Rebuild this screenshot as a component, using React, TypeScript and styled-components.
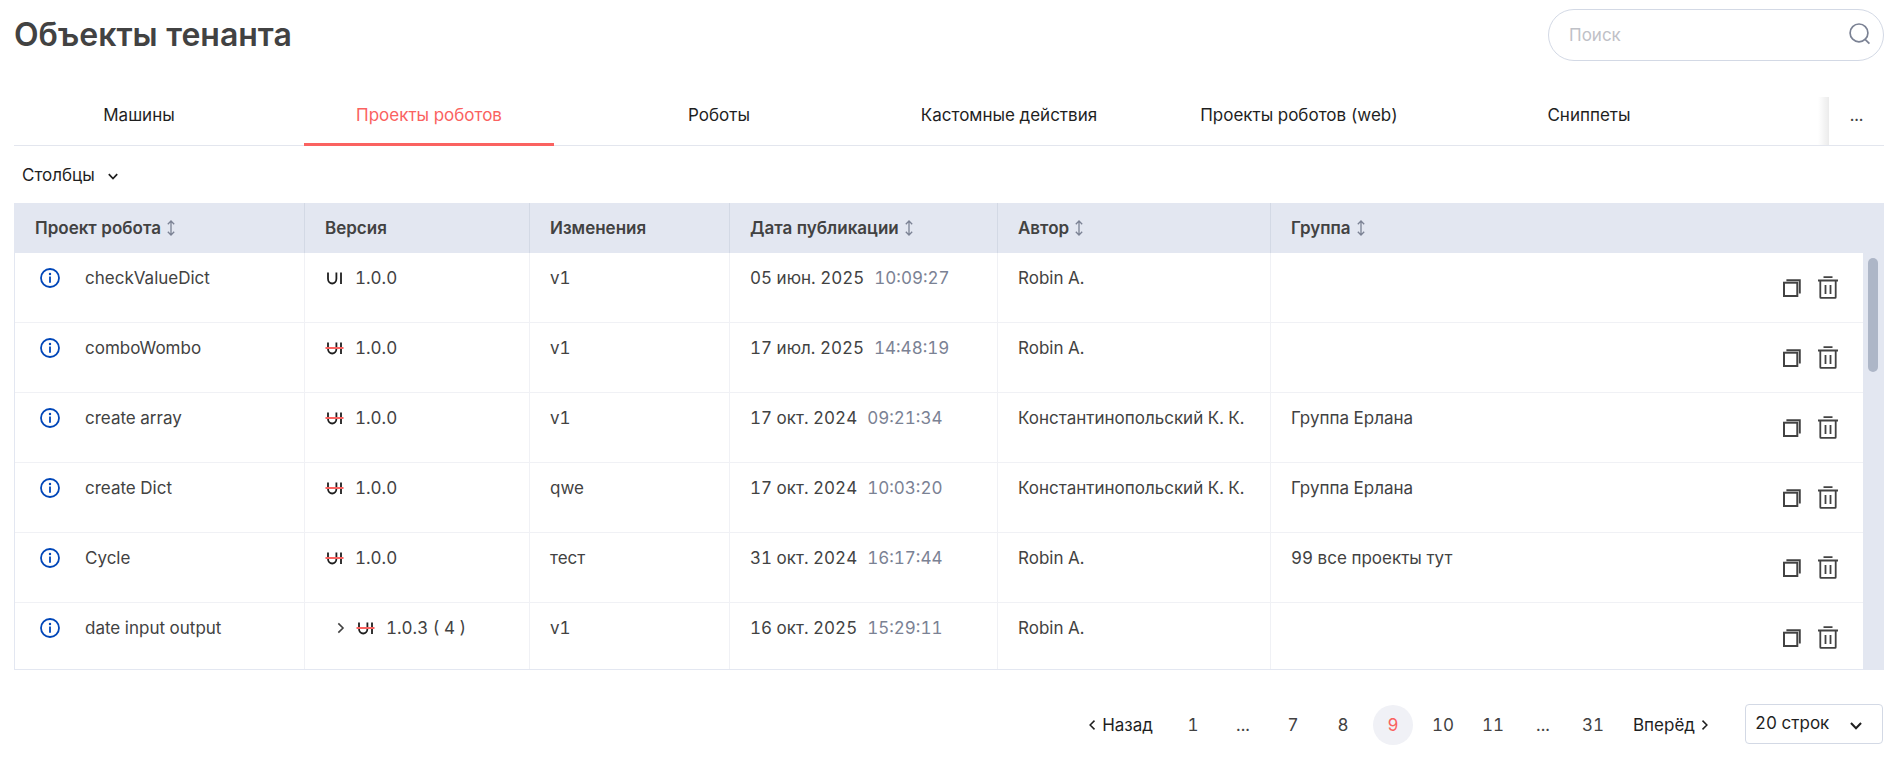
import React, { useState } from "react";
import styled, { createGlobalStyle } from "styled-components";

const color = {
  ink: "#1f1f1f",
  text: "#424242",
  muted: "#7b8294",
  accent: "#fa6260",
  info: "#0046b8",
  border: "#d3d9e5",
  line: "#e3e6ee",
  head: "#e3e7f1",
  grid: "#f0f1f5",
  thumb: "#adb6c7",
};

const GlobalStyle = createGlobalStyle`
  *, *::before, *::after { box-sizing: border-box; }
  body {
    margin: 0;
    background: #fff;
    color: ${color.text};
    font: 400 17px/24px Inter, "Noto Sans", sans-serif;
    font-variant-numeric: tabular-nums;
  }
  button, input, select { font: inherit; color: inherit; }
  button { padding: 0; border: 0; background: none; cursor: pointer; }
  svg { display: block; flex: none; }
`;

const Page = styled.main`
  padding: 9px 14px 16px;
`;

const Header = styled.header`
  display: flex;
  align-items: center;
  justify-content: space-between;
  margin-bottom: 36px;
`;

const Title = styled.h1`
  margin: 0;
  font-size: 32px;
  line-height: 40px;
  font-weight: 600;
`;

const SearchBox = styled.label`
  display: flex;
  align-items: center;
  width: 336px;
  height: 52px;
  padding: 0 12px 0 20px;
  border: 1px solid ${color.border};
  border-radius: 26px;
  color: ${color.muted};
`;

const SearchInput = styled.input`
  flex: 1;
  min-width: 0;
  padding: 0;
  border: 0;
  outline: 0;
  background: none;
  color: ${color.text};
  &::placeholder { color: #bfc1c7; opacity: 1; }
`;

const TabBar = styled.nav`
  display: flex;
  height: 49px;
  border-bottom: 1px solid ${color.line};
`;

const TabList = styled.div`
  display: flex;
  flex: 1;
  gap: 40px;
  min-width: 0;
  margin-bottom: -1px;
  overflow: hidden;
`;

const Tab = styled.button<{ $active: boolean }>`
  flex: none;
  width: 250px;
  padding-bottom: ${(p) => (p.$active ? 11 : 14)}px;
  border-bottom: ${(p) => (p.$active ? `3px solid ${color.accent}` : "0")};
  color: ${(p) => (p.$active ? color.accent : color.ink)};
`;

const MoreTabs = styled.button`
  width: 66px;
  padding: 0 0 12px 11px;
  background: linear-gradient(to right, transparent, rgba(0, 0, 0, 0.08)) left / 11px 100% no-repeat;
`;

const Toolbar = styled.div`
  display: flex;
  align-items: center;
  height: 57px;
  padding: 0 8px;
`;

const ColumnsButton = styled.button`
  display: flex;
  align-items: center;
  gap: 13px;
  color: ${color.ink};
`;

const Frame = styled.section`
  display: grid;
  grid-template-columns: minmax(0, 1fr) 20px;
  height: 467px;
  overflow: hidden;
  border: 1px solid ${color.head};
  border-top: 0;
  background: ${color.head};
`;

const Table = styled.table`
  width: 100%;
  table-layout: fixed;
  border-collapse: separate;
  border-spacing: 0;
`;

const Col = styled.col<{ $width?: number }>`
  width: ${(p) => (p.$width ? `${p.$width}px` : "auto")};
`;

const HeadCell = styled.th`
  height: 50px;
  padding: 0 20px;
  border-right: 1px solid ${color.border};
  background: ${color.head};
  font-weight: 600;
  text-align: left;
  white-space: nowrap;
  &:nth-last-child(-n + 2) { border-right: 0; }
`;

const SortButton = styled.button`
  display: flex;
  align-items: center;
  gap: 6px;
  font-weight: 600;
  svg { color: ${color.muted}; }
`;

const Cell = styled.td`
  height: 70px;
  padding: 13px 20px 0;
  border-right: 1px solid ${color.grid};
  border-bottom: 1px solid ${color.grid};
  background: #fff;
  vertical-align: top;
  white-space: nowrap;
  &:nth-last-child(-n + 2) { border-right: 0; }
`;

const ActionCell = styled(Cell)`
  padding: 0 25px 0 0;
  vertical-align: middle;
`;

const NameLine = styled.div`
  display: flex;
  align-items: center;
  gap: 25px;
  padding-left: 5px;
`;

const InfoButton = styled.button`
  color: ${color.info};
`;

const VersionLine = styled.div<{ $nested: boolean }>`
  display: flex;
  align-items: center;
  gap: 11px;
  padding-left: ${(p) => (p.$nested ? 12 : 0)}px;
`;

const Time = styled.time`
  margin-left: 10px;
  color: ${color.muted};
`;

const Actions = styled.div`
  display: flex;
  align-items: center;
  justify-content: flex-end;
  gap: 17px;
`;

const ScrollTrack = styled.div`
  padding: 55px 5px 0;
`;

const ScrollThumb = styled.div`
  height: 114px;
  border-radius: 5px;
  background: ${color.thumb};
`;

const Footer = styled.footer`
  display: flex;
  align-items: flex-start;
  justify-content: flex-end;
  gap: 36px;
  margin-top: 34px;
  padding-right: 1px;
`;

const Pager = styled.nav`
  display: flex;
  align-items: center;
  gap: 10px;
  padding-top: 1px;
`;

const PageButton = styled.button<{ $active?: boolean }>`
  width: 40px;
  height: 40px;
  border-radius: 50%;
  background: ${(p) => (p.$active ? "#f0f1f6" : "none")};
  color: ${(p) => (p.$active ? color.accent : color.text)};
`;

const Gap = styled.span`
  width: 40px;
  text-align: center;
`;

const StepButton = styled.button<{ $side: "left" | "right" }>`
  display: flex;
  align-items: center;
  gap: 6px;
  margin-${(p) => (p.$side === "left" ? "right" : "left")}: 10px;
  color: ${color.ink};
`;

const RowsBox = styled.div`
  display: grid;
  align-items: center;
  width: 138px;
  color: ${color.ink};
  > * { grid-area: 1 / 1; }
  > svg { justify-self: end; margin-right: 21px; pointer-events: none; }
`;

const RowsSelect = styled.select`
  width: 100%;
  height: 40px;
  padding: 0 32px 2px 9px;
  border: 1px solid ${color.border};
  border-radius: 4px;
  background: #fff;
  appearance: none;
`;

const SearchIcon = () => (
  <svg width="22" height="24" viewBox="0 0 22 24" fill="none" stroke="currentColor" strokeWidth="1.7">
    <circle cx="10" cy="9.9" r="8.9" />
    <path d="M15.6 15.9 20.4 20.7" />
  </svg>
);

const ChevronDown = ({ size = 10 }: { size?: number }) => (
  <svg width={size} height={size} viewBox="0 0 10 10" fill="none" stroke="currentColor" strokeWidth="1.7">
    <path d="M.8 4.2 5 8.6 9.2 4.2" />
  </svg>
);

const ChevronSide = ({ left = false, height = 10 }: { left?: boolean; height?: number }) => (
  <svg width="8" height={height} viewBox="0 0 6 8" fill="none" stroke="currentColor" strokeWidth="1.2">
    <path d={left ? "M5 .5 1.5 4 5 7.5" : "M1 .5 4.5 4 1 7.5"} />
  </svg>
);

const SortIcon = () => (
  <svg width="8" height="16" viewBox="0 0 8 16" fill="none" stroke="currentColor" strokeWidth="1.3">
    <path d="M4 1.5V14.5M.8 4.2 4 1 7.2 4.2M.8 11.8 4 15 7.2 11.8" />
  </svg>
);

const InfoIcon = () => (
  <svg width="20" height="20" viewBox="0 0 20 20" fill="none" stroke="currentColor" strokeWidth="1.8">
    <circle cx="10" cy="10" r="9" />
    <path d="M10 8.6V14.8" />
    <circle cx="10" cy="6" r="1.2" fill="currentColor" stroke="none" />
  </svg>
);

const UiIcon = ({ off }: { off: boolean }) => (
  <svg width="19" height="20" viewBox="0 0 19 20" fill="none" role="img" aria-label={off ? "UI off" : "UI on"}>
    <path d="M3 4.4V10.8A4.2 4.7 0 0 0 11.4 10.8V4.4M16 4.4V16" stroke={color.ink} strokeWidth="1.8" />
    {off && <path d="M.5 10H18.5" stroke={color.accent} strokeWidth="2" />}
  </svg>
);

const CopyIcon = () => (
  <svg width="18" height="18" viewBox="0 0 18 18" fill="none" stroke="currentColor">
    <rect x="1" y="3.7" width="13.3" height="13.3" strokeWidth="2" />
    <path d="M3.4 1.2H16.8V14.6" strokeWidth="1.9" />
  </svg>
);

const TrashIcon = () => (
  <svg width="20" height="23" viewBox="0 0 20 23" fill="none" stroke="currentColor" strokeWidth="1.8">
    <path d="M5.5 1.2H14.5M0 4.5H20M2.3 4.5V21.2Q2.3 21.8 2.9 21.8H17.1Q17.7 21.8 17.7 21.2V4.5" />
    <path d="M7.5 9V18M12.5 9V18" />
  </svg>
);

const tabs = ["Машины", "Проекты роботов", "Роботы", "Кастомные действия", "Проекты роботов (web)", "Сниппеты"];

const columns = [
  { title: "Проект робота", sortable: true, width: 290 },
  { title: "Версия", sortable: false, width: 225 },
  { title: "Изменения", sortable: false, width: 200 },
  { title: "Дата публикации", sortable: true, width: 268 },
  { title: "Автор", sortable: true, width: 273 },
  { title: "Группа", sortable: true, width: undefined },
];

type Project = {
  name: string;
  ui: boolean;
  version: string;
  count?: number;
  changes: string;
  date: string;
  time: string;
  author: string;
  group: string;
};

const projects: Project[] = [
  { name: "checkValueDict", ui: true, version: "1.0.0", changes: "v1", date: "05 июн. 2025", time: "10:09:27", author: "Robin A.", group: "" },
  { name: "comboWombo", ui: false, version: "1.0.0", changes: "v1", date: "17 июл. 2025", time: "14:48:19", author: "Robin A.", group: "" },
  { name: "create array", ui: false, version: "1.0.0", changes: "v1", date: "17 окт. 2024", time: "09:21:34", author: "Константинопольский К. К.", group: "Группа Ерлана" },
  { name: "create Dict", ui: false, version: "1.0.0", changes: "qwe", date: "17 окт. 2024", time: "10:03:20", author: "Константинопольский К. К.", group: "Группа Ерлана" },
  { name: "Cycle", ui: false, version: "1.0.0", changes: "тест", date: "31 окт. 2024", time: "16:17:44", author: "Robin A.", group: "99 все проекты тут" },
  { name: "date input output", ui: false, version: "1.0.3", count: 4, changes: "v1", date: "16 окт. 2025", time: "15:29:11", author: "Robin A.", group: "" },
];

const pages = ["1", "...", "7", "8", "9", "10", "11", "...", "31"];

export default function App() {
  const [tab, setTab] = useState("Проекты роботов");
  const [page, setPage] = useState("9");

  return (
    <Page>
      <GlobalStyle />
      <Header>
        <Title>Объекты тенанта</Title>
        <SearchBox>
          <SearchInput type="text" placeholder="Поиск" aria-label="Поиск" />
          <SearchIcon />
        </SearchBox>
      </Header>

      <TabBar>
        <TabList>
          {tabs.map((name) => (
            <Tab key={name} $active={name === tab} onClick={() => setTab(name)}>
              {name}
            </Tab>
          ))}
        </TabList>
        <MoreTabs aria-label="Ещё">...</MoreTabs>
      </TabBar>

      <Toolbar>
        <ColumnsButton>
          Столбцы
          <ChevronDown />
        </ColumnsButton>
      </Toolbar>

      <Frame>
        <Table>
          <colgroup>
            {columns.map((c) => (
              <Col key={c.title} $width={c.width} />
            ))}
            <Col $width={100} />
          </colgroup>
          <thead>
            <tr>
              {columns.map((c) => (
                <HeadCell key={c.title} scope="col">
                  {c.sortable ? (
                    <SortButton>
                      {c.title}
                      <SortIcon />
                    </SortButton>
                  ) : (
                    c.title
                  )}
                </HeadCell>
              ))}
              <HeadCell scope="col" aria-label="Действия" />
            </tr>
          </thead>
          <tbody>
            {projects.map((p) => (
              <tr key={p.name}>
                <Cell>
                  <NameLine>
                    <InfoButton aria-label="Информация">
                      <InfoIcon />
                    </InfoButton>
                    {p.name}
                  </NameLine>
                </Cell>
                <Cell>
                  <VersionLine $nested={p.count !== undefined}>
                    {p.count !== undefined && <ChevronSide height={12} />}
                    <UiIcon off={!p.ui} />
                    {p.version}
                    {p.count !== undefined && ` ( ${p.count} )`}
                  </VersionLine>
                </Cell>
                <Cell>{p.changes}</Cell>
                <Cell>
                  {p.date}
                  <Time>{p.time}</Time>
                </Cell>
                <Cell>{p.author}</Cell>
                <Cell>{p.group}</Cell>
                <ActionCell>
                  <Actions>
                    <button aria-label="Копировать">
                      <CopyIcon />
                    </button>
                    <button aria-label="Удалить">
                      <TrashIcon />
                    </button>
                  </Actions>
                </ActionCell>
              </tr>
            ))}
          </tbody>
        </Table>
        <ScrollTrack>
          <ScrollThumb />
        </ScrollTrack>
      </Frame>

      <Footer>
        <Pager aria-label="Страницы">
          <StepButton $side="left">
            <ChevronSide left />
            Назад
          </StepButton>
          {pages.map((n, i) =>
            n === "..." ? (
              <Gap key={i}>...</Gap>
            ) : (
              <PageButton key={i} $active={n === page} onClick={() => setPage(n)}>
                {n}
              </PageButton>
            )
          )}
          <StepButton $side="right">
            Вперёд
            <ChevronSide />
          </StepButton>
        </Pager>
        <RowsBox>
          <RowsSelect aria-label="Строк на странице" defaultValue="20">
            <option value="20">20 строк</option>
            <option value="50">50 строк</option>
            <option value="100">100 строк</option>
          </RowsSelect>
          <ChevronDown size={12} />
        </RowsBox>
      </Footer>
    </Page>
  );
}
